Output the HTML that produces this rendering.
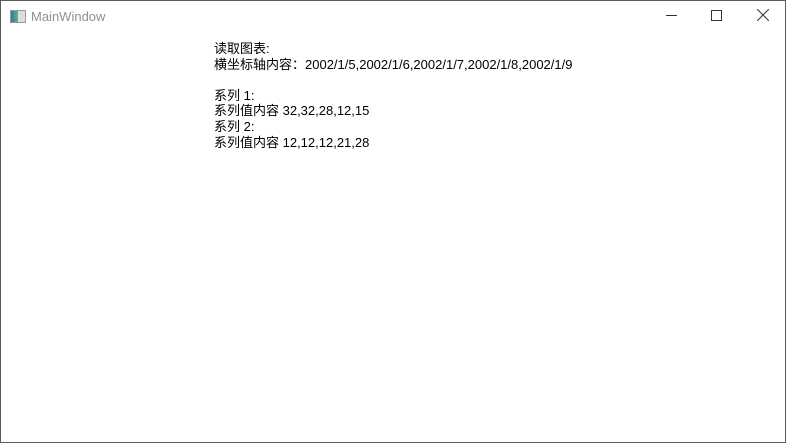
<!DOCTYPE html>
<html><head><meta charset="utf-8"><style>
html,body{margin:0;padding:0;width:786px;height:443px;overflow:hidden;background:#fff}
.win{position:absolute;left:0;top:0;width:784px;height:441px;border:1px solid #5a5a5a;background:#fff}
.title{position:absolute;left:30px;top:8px;font:13px "Liberation Sans","Noto Sans CJK SC",sans-serif;color:#8a8f9a}
.icon{position:absolute;left:9px;top:9px;width:14px;height:11px;border:1px solid #999;background:linear-gradient(90deg,#3a7a8a 0,#6aa 50%,#ddd 50%)}
.txt{position:absolute;left:213px;top:40px;font:13px/15.6px "Liberation Sans","Noto Sans CJK SC",sans-serif;color:#000;white-space:pre}
</style></head><body><div class="win">
<div class="icon"></div><div class="title">MainWindow</div>
<div style="position:absolute;left:665px;top:14px;width:11px;height:1px;background:#333"></div>
<div style="position:absolute;left:710px;top:9px;width:9px;height:9px;border:1px solid #333"></div>
<svg style="position:absolute;left:756px;top:8px" width="12" height="12"><path d="M0 0L12 12M12 0L0 12" stroke="#333" stroke-width="1"/></svg>
<div class="txt">读取图表:
横坐标轴内容：2002/1/5,2002/1/6,2002/1/7,2002/1/8,2002/1/9

系列 1:
系列值内容 32,32,28,12,15
系列 2:
系列值内容 12,12,12,21,28</div>
</div></body></html>
